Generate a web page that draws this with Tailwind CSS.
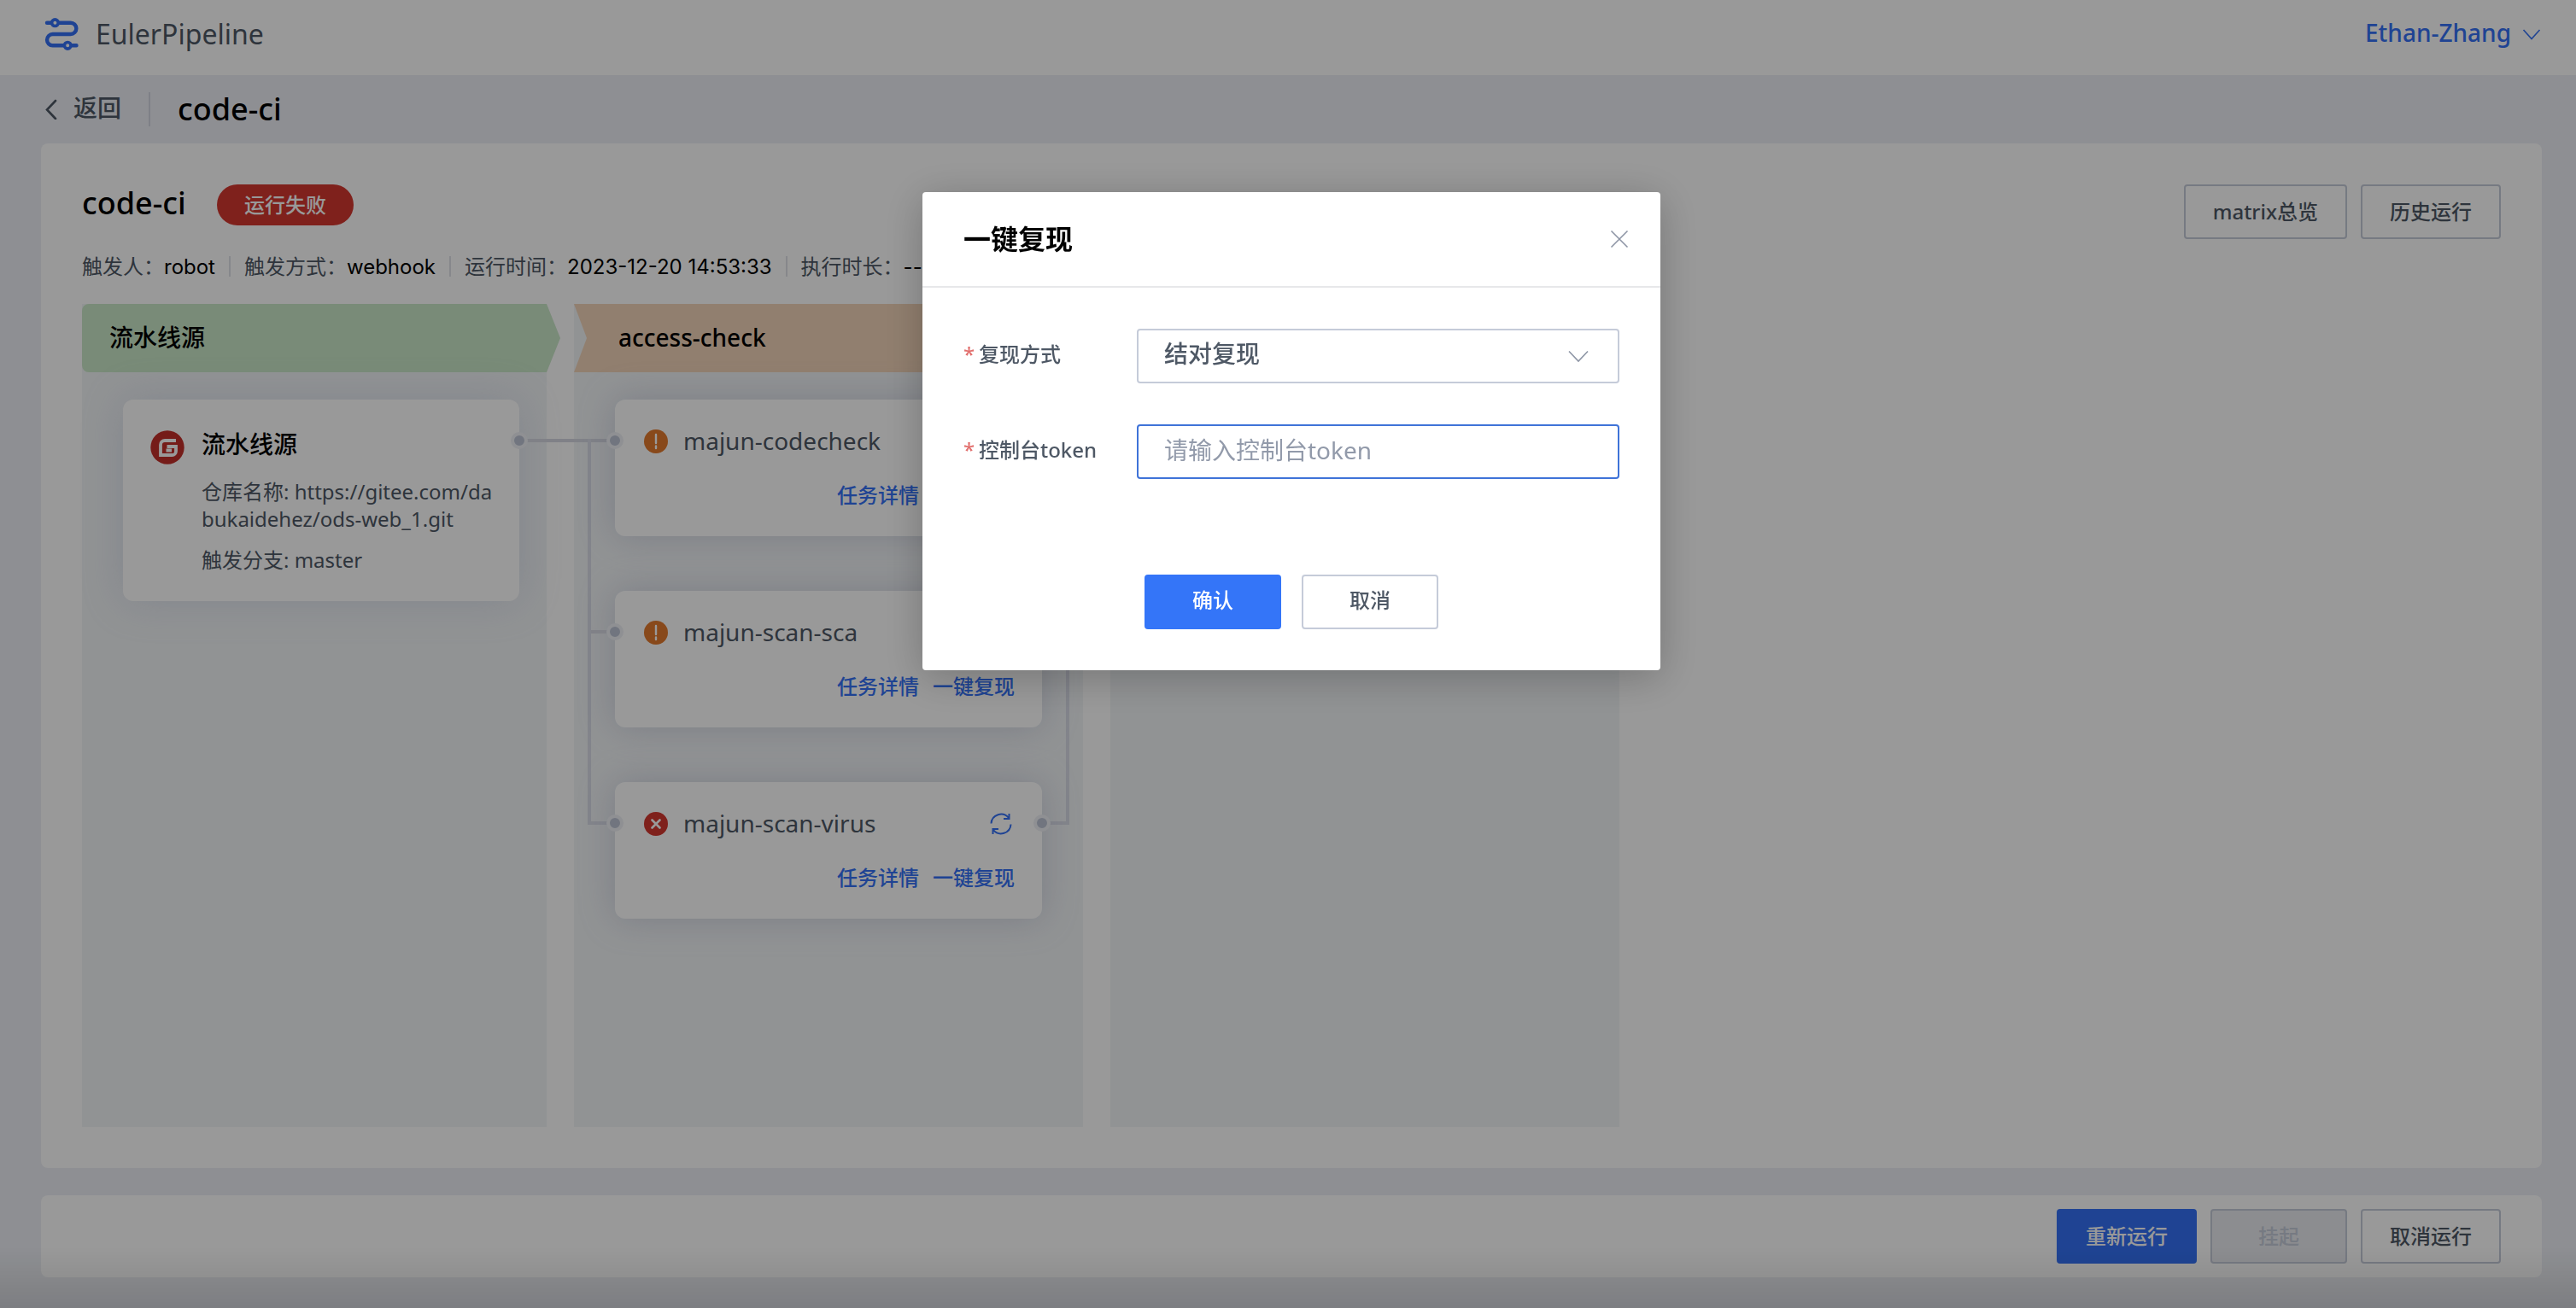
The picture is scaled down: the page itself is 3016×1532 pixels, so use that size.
<!DOCTYPE html>
<html lang="zh-CN">
<head>
  <meta charset="UTF-8" />
  <meta name="viewport" content="width=device-width, initial-scale=1.0"/>
  <title>EulerPipeline</title>
  <script src="https://cdn.jsdelivr.net/npm/@tailwindcss/browser@4"></script>
  <style>
    body { font-family: 'Noto Sans', 'Noto Sans CJK SC', sans-serif; }
    .num { font-family: 'Inter', 'Noto Sans CJK SC', sans-serif; }
  </style>
</head>
<body class="bg-[#edeff5] text-[#4e5865] text-2xl font-medium">
  <div class="min-h-screen flex flex-col">
    <header class="h-22 bg-white flex items-center justify-between pl-13 pr-10 pb-2">
      <a href="#" class="flex items-center gap-5">
        <svg viewBox="0 0 40 40" fill="none" stroke="#3471f5" class="w-10 h-10">
          <path stroke-width="4.4" stroke-linecap="round" d="M3 6.7H30.7a6.65 6.65 0 0 1 0 13.3H9.7a6.65 6.65 0 0 0 0 13.3H37.5"/>
          <circle cx="12.4" cy="6.7" r="3.8" stroke-width="3.6" fill="#fff"/>
          <circle cx="27.2" cy="33.3" r="3.8" stroke-width="3.6" fill="#fff"/>
        </svg>
        <span class="text-[32px] leading-10 font-normal">EulerPipeline</span>
      </a>
      <button type="button" class="flex items-center gap-3 text-[28px] leading-9 pb-1 text-[#3471f5]">
        Ethan-Zhang
        <svg viewBox="0 0 24 24" fill="none" stroke="currentColor" stroke-width="1.6" class="w-6 h-6 mt-1">
          <path d="M2.5 7 12 17.5 21.5 7"/>
        </svg>
      </button>
    </header>

    <main class="flex-1 flex flex-col pl-12 pr-10 pb-9">
      <nav class="h-20 flex items-center">
        <a href="#" class="flex items-center gap-[14px] text-[28px] leading-9 pb-1">
          <svg viewBox="0 0 24 24" fill="none" stroke="currentColor" stroke-width="2.6" stroke-linecap="round" class="w-6 h-6 mt-1">
            <path d="M17 2 7 12.5 17 23"/>
          </svg>
          返回
        </a>
        <span class="w-[2px] h-10 bg-[#d3d5e1] mx-8"></span>
        <span class="text-4xl text-black">code-ci</span>
      </nav>

      <section class="flex-1 flex flex-col bg-white rounded-lg p-12">
        <div class="flex items-start justify-between h-16">
          <div class="flex items-center gap-3">
            <h1 class="text-4xl font-medium text-black w-[146px] pb-1">code-ci</h1>
            <span class="h-12 px-8 flex items-center rounded-full bg-[#d43730] text-white">运行失败</span>
          </div>
          <div class="flex gap-4">
            <button type="button" class="h-16 px-8 border-2 border-[#c5cbd9] rounded-sm">matrix总览</button>
            <button type="button" class="h-16 px-8 border-2 border-[#c5cbd9] rounded-sm">历史运行</button>
          </div>
        </div>

        <div class="mt-3 h-10 flex items-center gap-4">
          <p class="font-normal">触发人：<span class="num text-black">robot</span></p>
          <span class="w-[2px] h-6 bg-[#dfe1e8]"></span>
          <p class="font-normal">触发方式：<span class="num text-black">webhook</span></p>
          <span class="w-[2px] h-6 bg-[#dfe1e8]"></span>
          <p class="font-normal">运行时间：<span class="num text-black">2023-12-20 14:53:33</span></p>
          <span class="w-[2px] h-6 bg-[#dfe1e8]"></span>
          <p class="font-normal">执行时长：<span class="num text-black">--</span></p>
        </div>

        <div class="flex-1 mt-6 flex gap-8">
          <!-- source stage -->
          <div class="w-[544px] flex flex-col bg-[#f2f5f7]">
            <h2 class="h-20 -mr-4 pl-8 flex items-center rounded-l-lg bg-[#cae8c8] text-[28px] font-medium text-black [clip-path:polygon(0_0,calc(100%-16px)_0,100%_50%,calc(100%-16px)_100%,0_100%)]">流水线源</h2>
            <div class="relative ml-12 mt-8 mr-8 py-8 pl-8 pr-5 flex gap-5 bg-white rounded-xl shadow-[0_0_48px_rgba(160,170,205,0.3)]">
              <svg viewBox="0 0 40 40" class="w-10 h-10 mt-1 shrink-0">
                <circle cx="20" cy="20" r="19.7" fill="#c4302b"/>
                <path d="M30 12H17a5 5 0 0 0-5 5v12h13.500a4.500 4.500 0 0 0 4.500-4.500V19H19.500M18.500 23.500H25" fill="none" stroke="#fff" stroke-width="3.800"/>
              </svg>
              <div>
                <h3 class="text-[28px] leading-10 font-medium text-black">流水线源</h3>
                <p class="mt-5 leading-8 break-all font-normal">仓库名称: https://gitee.com/dabukaidehez/ods-web_1.git</p>
                <p class="mt-4 leading-8 font-normal">触发分支: master</p>
              </div>
              <span class="absolute z-10 -right-[10px] top-[38px] w-5 h-5 rounded-full border-4 border-[#eef0f5] bg-[#bcc4d4]"></span>
              <span class="absolute left-full top-[46px] w-28 h-1 bg-[#d5d8e2]"></span>
            </div>
          </div>

          <!-- access-check stage -->
          <div class="w-[596px] flex flex-col bg-[#f2f5f7]">
            <h2 class="h-20 -mr-4 pl-13 flex items-center bg-[#f2d4b9] text-[28px] font-medium text-black [clip-path:polygon(0_0,calc(100%-16px)_0,100%_50%,calc(100%-16px)_100%,0_100%,15px_50%)]">access-check</h2>
            <div class="relative mt-8 px-12 flex flex-col gap-16">
              <span class="absolute z-10 left-4 right-4 top-[46px] bottom-[110px] border-x-4 border-b-4 border-[#dadde8]"></span>
              <article class="relative z-20 h-40 pt-7 px-8 bg-white rounded-xl shadow-[0_0_40px_rgba(150,155,185,0.4)]">
                <div class="flex items-center gap-4">
                  <svg viewBox="0 0 32 32" class="w-8 h-8"><circle cx="16" cy="17" r="14" fill="#e37a2d"/><path d="M16 9v10M16 22.500v2.500" stroke="#fff" stroke-width="2.400" stroke-linecap="round"/></svg>
                  <h3 class="text-[28px] leading-10 font-normal">majun-codecheck</h3>
                </div>
                <div class="mt-7 flex justify-end gap-4 leading-8 text-[#3471f5]">
                  <a href="#">任务详情</a>
                  <a href="#">一键复现</a>
                </div>
                <span class="absolute -left-[10px] top-[38px] w-5 h-5 rounded-full border-4 border-[#eef0f5] bg-[#bcc4d4]"></span>
                <span class="absolute -right-[10px] top-[38px] w-5 h-5 rounded-full border-4 border-[#eef0f5] bg-[#bcc4d4]"></span>
              </article>
              <article class="relative z-20 h-40 pt-7 px-8 bg-white rounded-xl shadow-[0_0_40px_rgba(150,155,185,0.4)]">
                <span class="absolute right-full top-[46px] w-7 h-1 bg-[#d5d8e2]"></span>
                <span class="absolute left-full top-[46px] w-7 h-1 bg-[#d5d8e2]"></span>
                <div class="flex items-center gap-4">
                  <svg viewBox="0 0 32 32" class="w-8 h-8"><circle cx="16" cy="17" r="14" fill="#e37a2d"/><path d="M16 9v10M16 22.500v2.500" stroke="#fff" stroke-width="2.400" stroke-linecap="round"/></svg>
                  <h3 class="text-[28px] leading-10 font-normal">majun-scan-sca</h3>
                </div>
                <div class="mt-7 flex justify-end gap-4 leading-8 text-[#3471f5]">
                  <a href="#">任务详情</a>
                  <a href="#">一键复现</a>
                </div>
                <span class="absolute -left-[10px] top-[38px] w-5 h-5 rounded-full border-4 border-[#eef0f5] bg-[#bcc4d4]"></span>
                <span class="absolute -right-[10px] top-[38px] w-5 h-5 rounded-full border-4 border-[#eef0f5] bg-[#bcc4d4]"></span>
              </article>
              <article class="relative z-20 h-40 pt-7 px-8 bg-white rounded-xl shadow-[0_0_40px_rgba(150,155,185,0.4)]">
                <div class="flex items-center gap-4">
                  <svg viewBox="0 0 32 32" class="w-8 h-8"><circle cx="16" cy="17" r="14" fill="#d43730"/><path d="M11.500 12.500l9 9M20.500 12.500l-9 9" stroke="#fff" stroke-width="2.600" stroke-linecap="round"/></svg>
                  <h3 class="flex-1 text-[28px] leading-10 font-normal">majun-scan-virus</h3>
                  <button type="button" aria-label="重试" class="text-[#3471f5]">
                    <svg viewBox="0 0 32 32" fill="none" stroke="currentColor" stroke-width="2" class="w-8 h-8">
                      <path d="M4.500 16.500a11.500 11.500 0 0 1 20.500-6.500M25.500 5v6h-6.500M27.500 17.500a11.500 11.500 0 0 1-20.500 6.500M6.500 29v-6h6.500"/>
                    </svg>
                  </button>
                </div>
                <div class="mt-7 flex justify-end gap-4 leading-8 text-[#3471f5]">
                  <a href="#">任务详情</a>
                  <a href="#">一键复现</a>
                </div>
                <span class="absolute -left-[10px] top-[38px] w-5 h-5 rounded-full border-4 border-[#eef0f5] bg-[#bcc4d4]"></span>
                <span class="absolute -right-[10px] top-[38px] w-5 h-5 rounded-full border-4 border-[#eef0f5] bg-[#bcc4d4]"></span>
              </article>
            </div>
          </div>

          <div class="w-[596px] bg-[#f2f5f7]"></div>
        </div>
      </section>

      <footer class="mt-8 h-24 px-12 flex items-center justify-end gap-4 bg-white rounded-lg">
        <button type="button" class="h-16 px-8 border-2 border-[#3471f5] rounded-sm bg-[#3471f5] text-white">重新运行</button>
        <button type="button" disabled class="h-16 w-40 border-2 border-[#c5cbd9] rounded-sm bg-[#e9ebf0] text-[#c5cbd9]">挂起</button>
        <button type="button" class="h-16 px-8 border-2 border-[#c5cbd9] rounded-sm">取消运行</button>
      </footer>
    </main>
  </div>

  <div class="fixed inset-0 z-50 bg-black/40 flex items-start justify-center pt-[225px] pl-2">
    <div class="absolute inset-x-0 bottom-0 h-18 bg-linear-to-b from-transparent to-black/12"></div>
    <form role="dialog" aria-labelledby="dlgTitle" class="w-[864px] bg-white rounded-sm shadow-[0_8px_48px_rgba(0,0,0,0.24)]">
      <div class="h-28 px-12 flex items-center justify-between border-b-2 border-[#e7e8ea]">
        <h2 id="dlgTitle" class="text-[32px] font-bold text-black">一键复现</h2>
        <button type="button" aria-label="关闭" class="text-[#8d95a5] -mr-3.5">
          <svg viewBox="0 0 28 28" fill="none" stroke="currentColor" stroke-width="1.600" class="w-7 h-7">
            <path d="M4.500 4.500l19 19M23.500 4.500l-19 19"/>
          </svg>
        </button>
      </div>
      <div class="p-12 flex flex-col gap-12">
        <div class="flex items-center">
          <label for="mode" class="w-[203px] flex gap-2 pb-1"><span class="text-[#e2706e] w-[10px]">*</span>复现方式</label>
          <div class="relative flex-1">
            <select id="mode" class="appearance-none w-full h-16 px-[30px] pb-1 border-2 border-[#c5cbd9] rounded-sm bg-white text-[28px]">
              <option>结对复现</option>
            </select>
            <svg viewBox="0 0 24 24" fill="none" stroke="#8d95a5" stroke-width="1.600" class="w-6 h-6 absolute right-9 top-5 pointer-events-none">
              <path d="M1 6.500 12 18 23 6.500"/>
            </svg>
          </div>
        </div>
        <div class="flex items-center">
          <label for="token" class="w-[203px] flex gap-2 pb-1"><span class="text-[#e2706e] w-[10px]">*</span>控制台token</label>
          <input id="token" type="text" placeholder="请输入控制台token" class="flex-1 h-16 px-[30px] pb-1 border-2 border-[#3f73d8] rounded-sm text-[28px] font-normal placeholder:text-[#929aaa] outline-none" />
        </div>
        <div class="mt-16 flex justify-center gap-6">
          <button type="submit" class="w-40 h-16 pb-1 rounded-sm bg-[#3475f8] text-white">确认</button>
          <button type="button" class="w-40 h-16 pb-1 rounded-sm border-2 border-[#c5cbd9]">取消</button>
        </div>
      </div>
    </form>
  </div>
</body>
</html>
